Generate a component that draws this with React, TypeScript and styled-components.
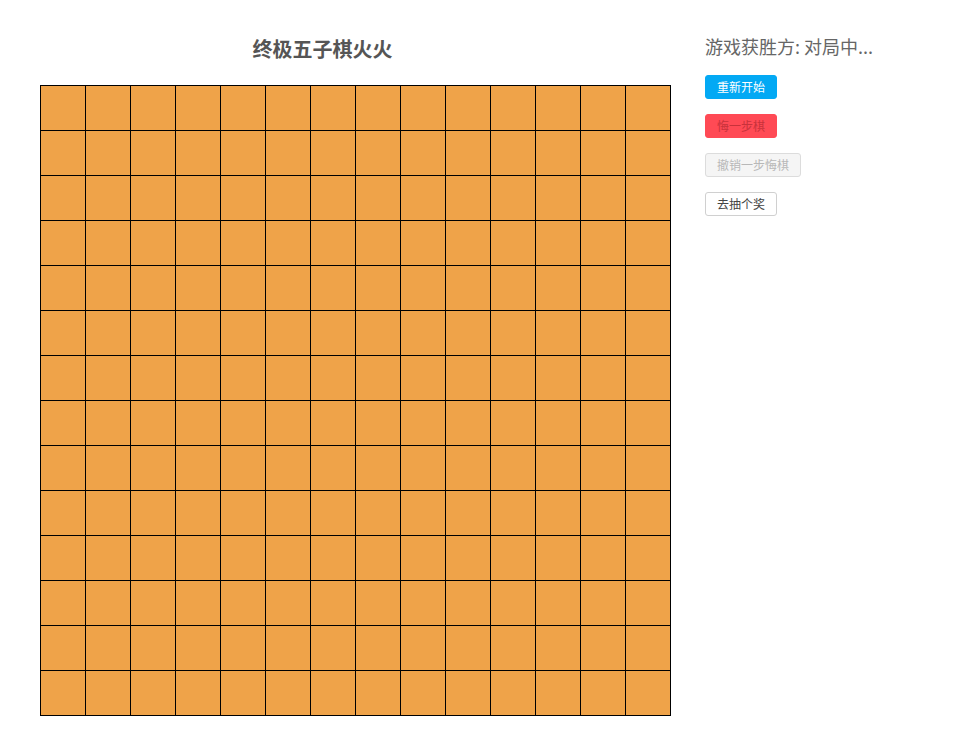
import React from "react";
import styled, { createGlobalStyle } from "styled-components";

const Global = createGlobalStyle`
  html, body { margin: 0; padding: 0; background: #fff; }
  body { font-family: "Noto Sans CJK SC", "Noto Sans", sans-serif; }
`;

const Page = styled.div`
  display: flex;
  align-items: flex-start;
`;

const LeftColumn = styled.div`
  display: flex;
  flex-direction: column;
  padding-left: 40px;
  padding-top: 34px;
`;

const Title = styled.h1`
  margin: 0 0 21px 0;
  width: 565px;
  text-align: center;
  font-size: 20px;
  line-height: 30px;
  font-weight: bold;
  color: #555;
`;

const Board = styled.div`
  display: grid;
  grid-template-columns: repeat(14, 45px);
  grid-auto-rows: 45px;
  border-left: 1px solid #000;
  border-top: 1px solid #000;
  width: max-content;
`;

const Cell = styled.div`
  box-sizing: border-box;
  background: #efa349;
  border-right: 1px solid #000;
  border-bottom: 1px solid #000;
`;

const Panel = styled.div`
  display: flex;
  flex-direction: column;
  align-items: flex-start;
  margin-left: 34px;
  padding-top: 33px;
  gap: 15px;
`;

const Status = styled.div`
  font-size: 18px;
  line-height: 27px;
  color: #666;
`;

type Variant = "primary" | "danger" | "disabled" | "default";

const Button = styled.button<{ $variant: Variant }>`
  box-sizing: border-box;
  height: 24px;
  padding: 0 11px;
  font-family: "Noto Sans CJK SC", "Noto Sans", sans-serif;
  font-size: 12px;
  line-height: 22px;
  border-radius: 3px;
  border: 1px solid
    ${(p) =>
      p.$variant === "primary"
        ? "#03a9f4"
        : p.$variant === "danger"
        ? "#ff4a55"
        : p.$variant === "disabled"
        ? "#dcdcdc"
        : "#d0d0d0"};
  background: ${(p) =>
    p.$variant === "primary"
      ? "#03a9f4"
      : p.$variant === "danger"
      ? "#ff4a55"
      : p.$variant === "disabled"
      ? "#f5f5f5"
      : "#fff"};
  color: ${(p) =>
    p.$variant === "primary"
      ? "#fff"
      : p.$variant === "danger"
      ? "#c8323b"
      : p.$variant === "disabled"
      ? "#b8b8b8"
      : "#444"};
  cursor: ${(p) => (p.$variant === "disabled" ? "not-allowed" : "pointer")};
`;

export default function App() {
  const cells = Array.from({ length: 14 * 14 }, (_, i) => i);
  return (
    <>
      <Global />
      <Page>
        <LeftColumn>
          <Title>终极五子棋火火</Title>
          <Board>
            {cells.map((i) => (
              <Cell key={i} />
            ))}
          </Board>
        </LeftColumn>
        <Panel>
          <Status>游戏获胜方: 对局中...</Status>
          <Button $variant="primary">重新开始</Button>
          <Button $variant="danger">悔一步棋</Button>
          <Button $variant="disabled" disabled>
            撤销一步悔棋
          </Button>
          <Button $variant="default">去抽个奖</Button>
        </Panel>
      </Page>
    </>
  );
}
